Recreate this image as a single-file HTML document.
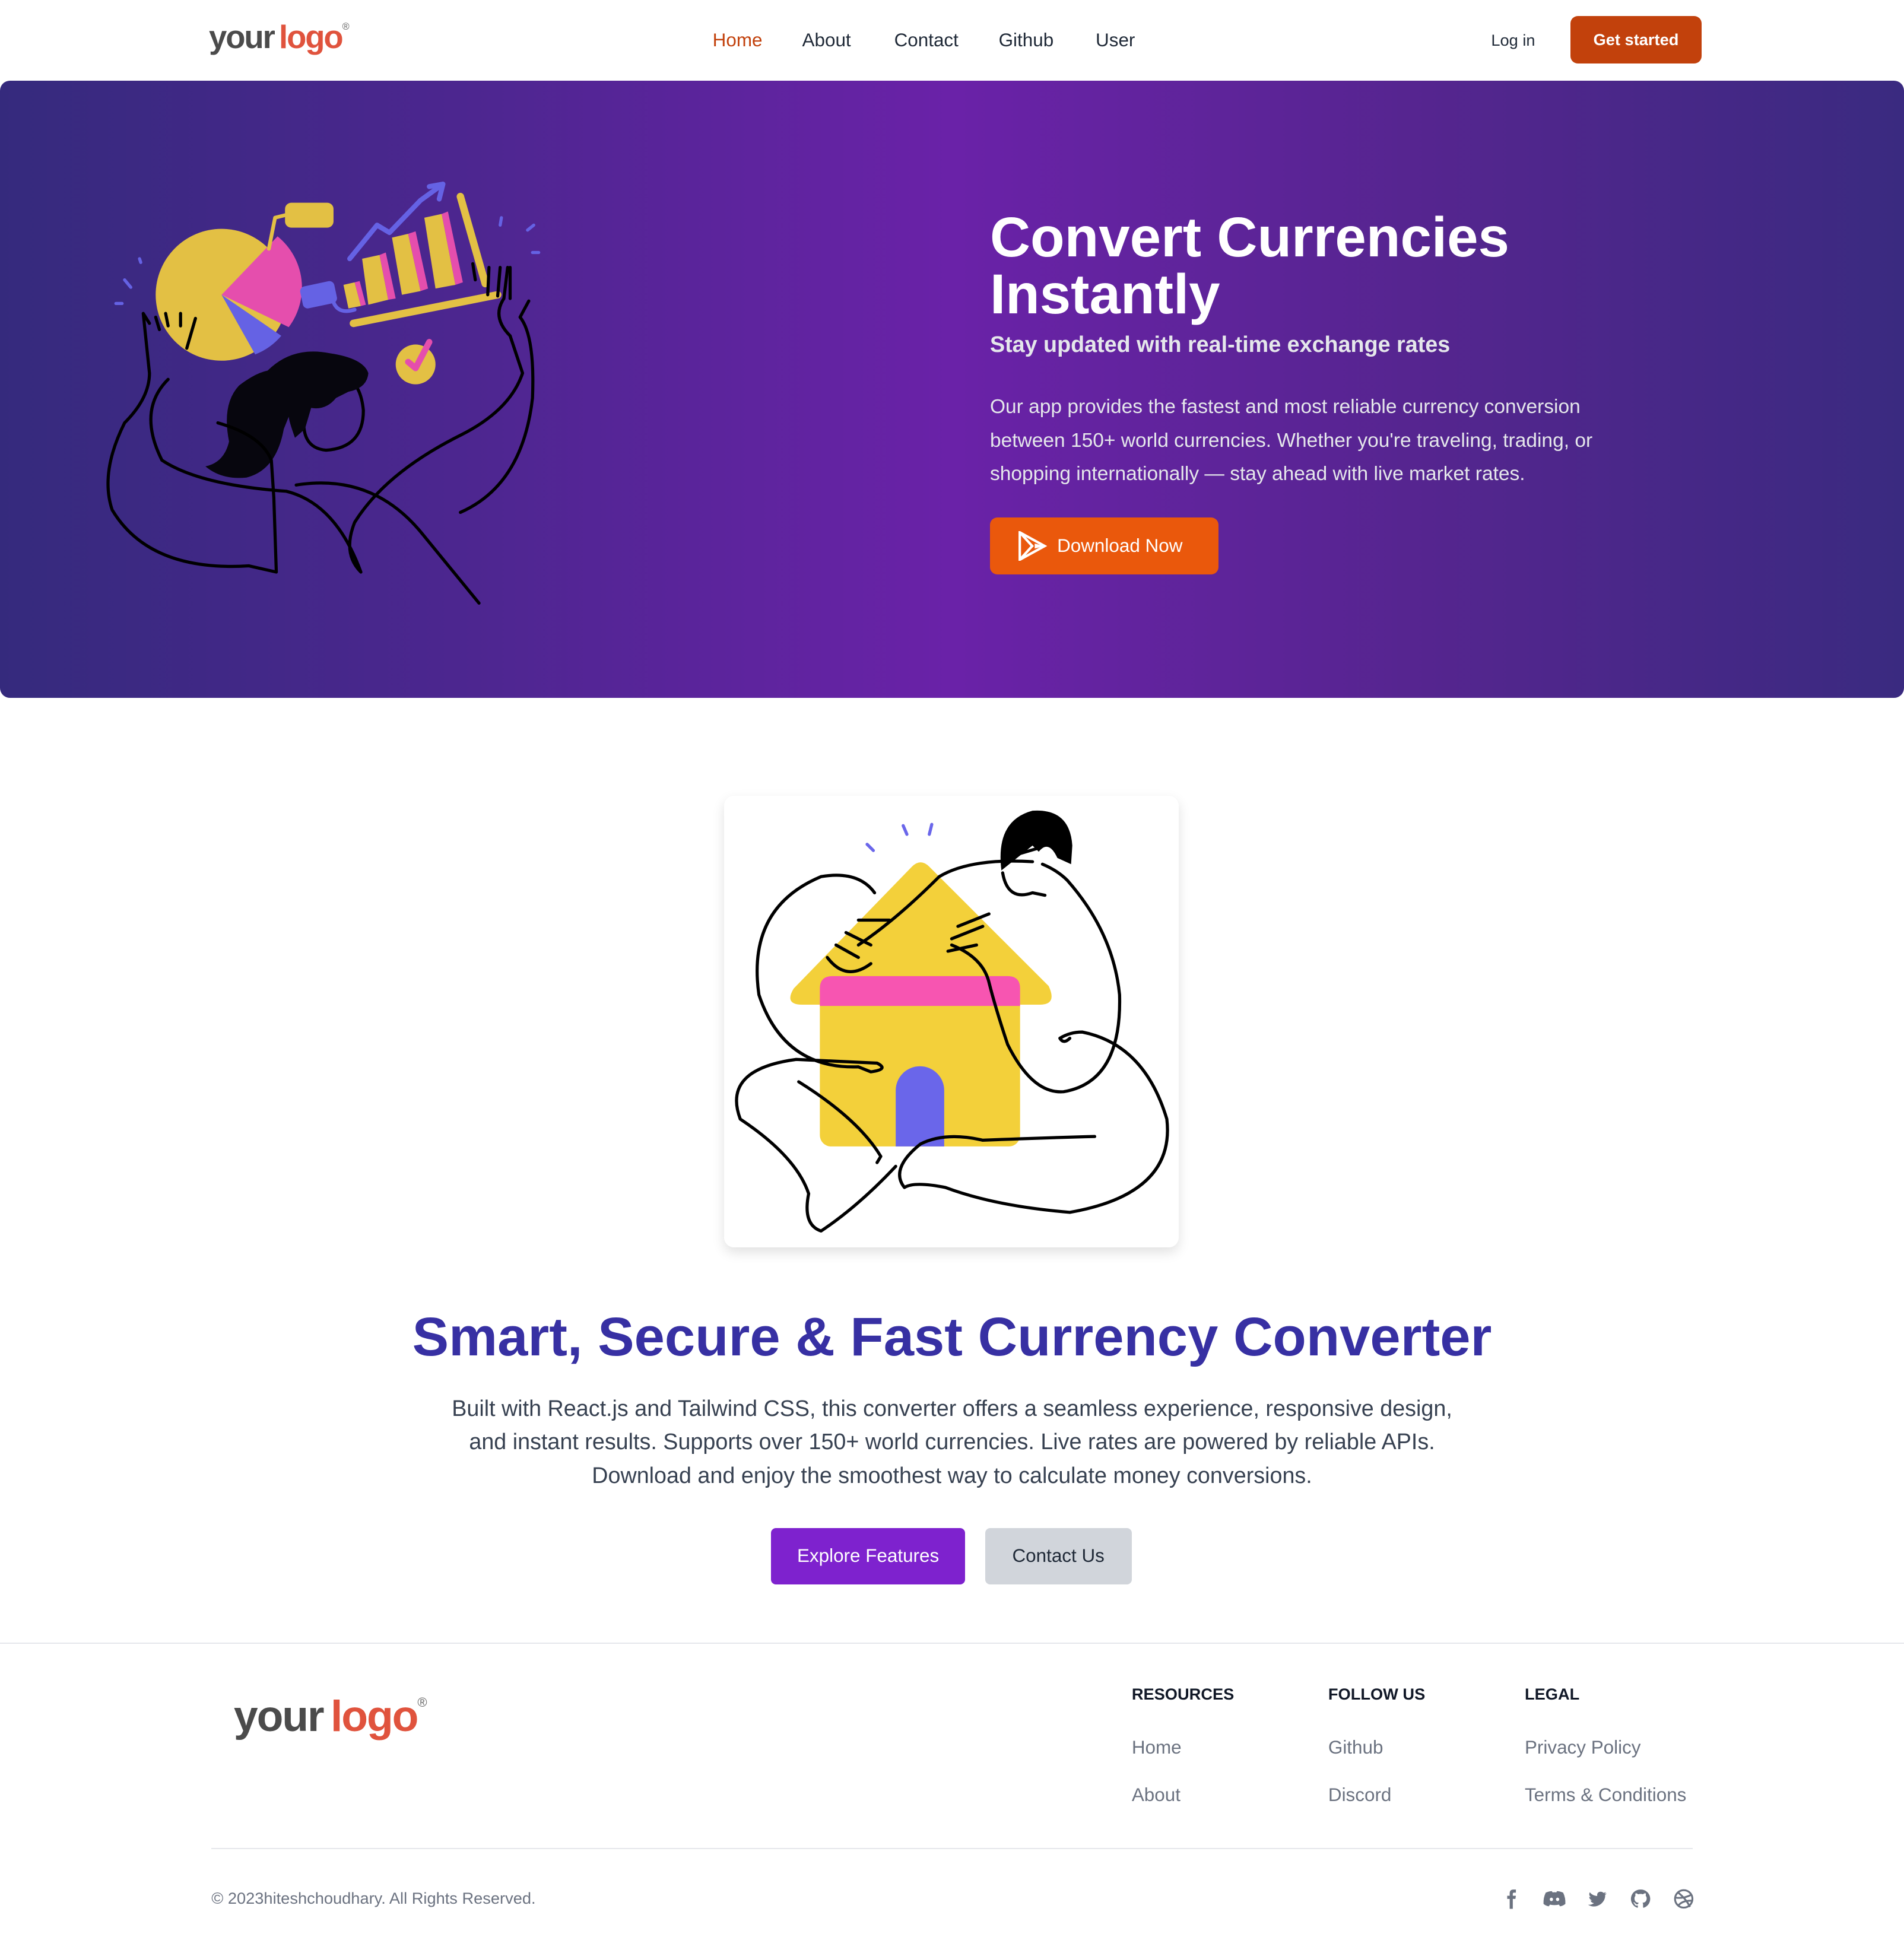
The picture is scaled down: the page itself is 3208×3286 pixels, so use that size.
<!DOCTYPE html>
<html><head><meta charset="utf-8"><style>
*{margin:0;padding:0;box-sizing:border-box}
html,body{width:3208px;height:3286px;overflow:hidden;background:#fff}
#w{zoom:2.0954;width:1531px;height:1568px;position:relative;font-family:"Liberation Sans",sans-serif;color:#111}
.a{position:absolute;white-space:nowrap}
.logo{font-weight:bold;letter-spacing:-1px}
.logo .y{color:#4b4b4b}.logo .l{color:#e0533d}.logo sup{font-size:.3em;color:#666;font-weight:normal;vertical-align:top;position:relative;top:.3em}
.nav{font-size:15px;color:#1f2937}
.hero{position:absolute;left:0;top:65px;width:1531px;height:496px;border-radius:8px;background:linear-gradient(to right,#352a7d 0%,#4d2690 25%,#6a22a8 50%,#55258f 75%,#3a2a80 100%)}
.fh{font-size:13px;font-weight:bold;color:#111827}
.fl{font-size:15px;color:#6b7280}
</style></head><body><div id="w">
<div class="a logo" style="left:168px;top:15px;font-size:26px"><span class="y">your</span><span class="l" style="margin-left:4px">logo</span><sup>®</sup></div>
<div class="a nav" style="left:573px;top:24px;color:#c2410c">Home</div>
<div class="a nav" style="left:645px;top:24px">About</div>
<div class="a nav" style="left:719px;top:24px">Contact</div>
<div class="a nav" style="left:803px;top:24px">Github</div>
<div class="a nav" style="left:881px;top:24px">User</div>
<div class="a" style="left:1199px;top:25px;font-size:13px;color:#1f2937">Log in</div>
<div class="a" style="left:1263px;top:13px;width:105px;height:38px;background:#c2410c;border-radius:6px;color:#fff;font-size:13px;font-weight:bold;text-align:center;line-height:38px">Get started</div>

<div class="hero">
<svg class="a" style="left:80px;top:70px" width="370" height="370" viewBox="80 135 370 370" fill="none" stroke-linecap="round" stroke-linejoin="round">
<circle cx="178" cy="237" r="53" fill="#e3c044"/>
<path d="M178 237 L223 190 A53 53 0 0 1 232 263 Z" fill="#e54ead"/>
<path d="M178 237 L226 270 A53 53 0 0 1 205 285 Z" fill="#6562e4"/>
<rect x="229" y="163" width="39" height="20" rx="5" fill="#e3c044"/>
<path d="M216 200 L221 175 L229 173" stroke="#e3c044" stroke-width="3"/>
<rect x="242" y="228" width="28" height="18" rx="4" fill="#6562e4" transform="rotate(-12 256 237)"/>
<path d="M268 243 Q272 253 285 249" stroke="#6562e4" stroke-width="3"/>
<path d="M280 248 L290 246 L285 227 L276 229Z" fill="#e3c044"/>
<path d="M285 227 L290 246 L294 245 L289 226Z" fill="#e54ead"/>
<path d="M296 245 L312 241 L305 205 L291 208Z" fill="#e3c044"/><path d="M305 205 L312 241 L318 240 L310 203Z" fill="#e54ead"/>
<path d="M323 237 L338 234 L328 188 L315 191Z" fill="#e3c044"/><path d="M328 188 L338 234 L344 232 L334 186Z" fill="#e54ead"/>
<path d="M350 232 L366 229 L355 172 L341 175Z" fill="#e3c044"/><path d="M355 172 L366 229 L372 227 L360 170Z" fill="#e54ead"/>
<path d="M284 260 L400 237 M370 158 L390 228" stroke="#e3c044" stroke-width="6"/>
<path d="M281 208 L303 181 L313 187 L338 161 L356 148 M356 148 L345 150 M356 148 L353 160" stroke="#6562e4" stroke-width="4"/>
<circle cx="334" cy="293" r="16" fill="#e3c044"/>
<path d="M328 291 L334 296 L345 275" stroke="#e54ead" stroke-width="5"/>
<path d="M100 225l5 6M93 244h5M112 208l1 3M403 175l-1 6M424 185l5-4M428 203h5" stroke="#6562e4" stroke-width="2.5"/>
<path d="M245 330 Q240 360 262 362 Q292 360 292 330 Q290 310 280 305" fill="none" stroke="#000" stroke-width="2.5"/>
<path d="M215 298 Q235 278 265 284 Q292 288 296 300 Q295 312 280 315 L270 320 Q262 330 250 328 L245 345 L237 352 Q232 338 232 335 L228 345 Q222 378 198 384 Q178 386 165 375 Q180 372 184 355 Q178 325 192 310 Q205 300 215 298Z" fill="#07060e"/>
<path d="M120 260 L115 252 L120 300 Q120 320 100 340 Q80 380 90 410 Q120 460 200 455 L222 460 L220 400 L218 370 Q210 350 175 340 M135 305 Q110 330 130 370 Q160 390 230 395 Q270 405 290 460 L290 460 Q275 445 285 420 Q310 380 370 350 Q410 330 420 300 L410 270 Q395 255 405 240 L408 215 M238 390 Q300 380 340 430 L385 485 M370 412 Q420 390 428 320 Q430 270 418 255 L425 242" stroke="#000" stroke-width="2.5"/>
<path d="M128 265 L125 255 M135 262 L133 252 M145 262 L145 252 M150 280 L157 256" stroke="#000" stroke-width="2.5"/>
<path d="M382 225 L380 212 M392 237 L393 215 M400 238 L402 215 M410 240 L410 215" stroke="#000" stroke-width="2.5"/>
</svg>
<div class="a" style="left:796px;top:103px;font-size:45px;font-weight:bold;color:#fff;line-height:46px">Convert Currencies<br>Instantly</div>
<div class="a" style="left:796px;top:202px;font-size:18px;font-weight:bold;color:#e5e7eb">Stay updated with real-time exchange rates</div>
<div class="a" style="left:796px;top:249px;font-size:16px;color:#e5e7eb;line-height:27px;white-space:normal;width:525px">Our app provides the fastest and most reliable currency conversion between 150+ world currencies. Whether you're traveling, trading, or shopping internationally — stay ahead with live market rates.</div>
<div class="a" style="left:796px;top:351px;width:184px;height:46px;background:#ea580c;border-radius:6px;color:#fff;font-size:15px;line-height:46px;padding-left:54px">Download Now
<svg class="a" style="left:22px;top:11px" width="24" height="24" viewBox="0 0 24 24"><path d="M2 1 L22 12 L2 23 Z M2 1 L12 12 L2 23" fill="none" stroke="#fff" stroke-width="2"/><path d="M14 10 L22 12 L14 14Z" fill="#fff"/></svg></div>
</div>

<div class="a" style="left:582px;top:640px;width:366px;height:363px;background:#fff;border-radius:8px;box-shadow:0 4px 10px rgba(0,0,0,.12)">
<svg width="366" height="363" viewBox="582 640 366 363" fill="none" stroke-linecap="round" stroke-linejoin="round">
<path d="M733 697 Q740 690 747 697 L843 793 Q850 808 836 808 L645 808 Q630 808 638 795Z" fill="#f3d03a"/>
<rect x="659" y="785" width="161" height="137" rx="9" fill="#f3d03a"/>
<path d="M659 809 V795 Q659 785 669 785 H810 Q820 785 820 795 V809Z" fill="#f755b1"/>
<path d="M720 922 V877 A19.5 19.5 0 0 1 759 877 V922Z" fill="#6a66ea"/>
<path d="M697 679l5 5M726 664l3 7M749 663l-2 8" stroke="#6a66ea" stroke-width="2.5"/>
<path d="M805 700 Q800 660 830 652 Q860 650 862 680 L861 695 L850 690 Q843 675 835 685 L830 680Z" fill="#000"/>
<path d="M806 702 Q810 725 830 718 L840 720 M808 690 L835 682 M838 695 Q850 700 858 708 Q895 750 900 800 Q902 870 855 878 Q830 880 810 840 Q800 810 795 790 Q790 770 765 760 M860 835 Q855 840 852 835 Q860 830 870 830 Q920 840 938 900 Q945 960 860 975 Q800 970 760 955 Q735 950 727 955 Q715 940 740 920 Q760 910 790 917 Q840 915 880 914 M720 938 Q690 970 660 990 Q645 985 650 960 Q640 930 595 900 Q580 860 640 852 L705 855 Q715 860 700 862 L690 858 Q630 860 610 800 Q600 730 660 705 Q690 700 703 718 M642 870 Q690 900 708 930 L705 935 M690 760 Q720 740 755 705 Q780 690 830 693" stroke="#000" stroke-width="2.5"/>
<path d="M665 770 Q680 790 700 775 M672 760 L690 770 M680 750 L700 760 M690 740 L715 740 M770 745 L795 735 M765 755 L790 745 M762 765 L785 760" stroke="#000" stroke-width="2.5"/>
</svg></div>

<div class="a" style="left:0;width:1531px;top:1050px;text-align:center;font-size:44px;font-weight:bold;color:#3730a3">Smart, Secure &amp; Fast Currency Converter</div>
<div class="a" style="left:0;width:1531px;top:1119px;text-align:center;font-size:18px;color:#374151;line-height:27px">Built with React.js and Tailwind CSS, this converter offers a seamless experience, responsive design,<br>and instant results. Supports over 150+ world currencies. Live rates are powered by reliable APIs.<br>Download and enjoy the smoothest way to calculate money conversions.</div>
<div class="a" style="left:620px;top:1229px;width:156px;height:45px;background:#7e22ce;border-radius:4px;color:#fff;font-size:15px;text-align:center;line-height:45px">Explore Features</div>
<div class="a" style="left:792px;top:1229px;width:118px;height:45px;background:#d1d5db;border-radius:4px;color:#1f2937;font-size:15px;text-align:center;line-height:45px">Contact Us</div>

<div class="a" style="left:0;top:1321px;width:1531px;height:1px;background:#e5e7eb"></div>
<div class="a logo" style="left:188px;top:1360px;font-size:35px"><span class="y">your</span><span class="l" style="margin-left:6px">logo</span><sup>®</sup></div>
<div class="a fh" style="left:910px;top:1355px">RESOURCES</div>
<div class="a fh" style="left:1068px;top:1355px">FOLLOW US</div>
<div class="a fh" style="left:1226px;top:1355px">LEGAL</div>
<div class="a fl" style="left:910px;top:1397px">Home</div>
<div class="a fl" style="left:910px;top:1435px">About</div>
<div class="a fl" style="left:1068px;top:1397px">Github</div>
<div class="a fl" style="left:1068px;top:1435px">Discord</div>
<div class="a fl" style="left:1226px;top:1397px">Privacy Policy</div>
<div class="a fl" style="left:1226px;top:1435px">Terms &amp; Conditions</div>
<div class="a" style="left:170px;top:1486px;width:1191px;height:1px;background:#e5e7eb"></div>
<div class="a" style="left:170px;top:1519px;font-size:13px;color:#6b7280">© 2023hiteshchoudhary. All Rights Reserved.</div>
<svg class="a" style="left:1208px;top:1518px" width="156" height="18" viewBox="0 0 156 18" fill="#6b7280">
<path d="M6 17V9H4V6.5h2V4.5Q6 1.5 9 1.5H11V4H9.5Q8.5 4 8.5 5V6.5H11L10.6 9H8.5V17Z"/>
<path d="M35 4Q38 2.7 40 2.8L40.5 3.8Q42 3.5 43.5 3.8L44 2.8Q46 2.7 49 4Q51 8 50.8 13Q49 14.6 46.5 15L45.6 13.6Q44 14 42 14Q40 14 38.4 13.6L37.5 15Q35 14.6 33.2 13Q33 8 35 4Z M39.5 8a1.3 1.4 0 1 0 .1 0Z M44.5 8a1.3 1.4 0 1 0 .1 0Z" fill-rule="evenodd"/>
<path d="M84 4.5Q83 5 82.2 5.1Q83 4.5 83.4 3.5Q82.5 4 81.5 4.2Q80 2.8 78 3.4Q76 4.3 76.4 6.7Q72.8 6.5 70.4 3.7Q69.3 6 71.2 7.6Q70.5 7.6 70 7.3Q70 9.5 72.3 10.2Q71.6 10.4 71 10.2Q71.7 12.3 73.8 12.4Q71.8 14 69 13.7Q74.5 16.8 79.5 13Q83 10 82.8 5.8Q83.6 5.2 84 4.5Z"/>
<path d="M111 1.5a7.5 7.5 0 0 0-2.4 14.6c.4.1.5-.2.5-.4v-1.4c-2.1.5-2.5-.9-2.5-.9-.3-.9-.8-1.1-.8-1.1-.7-.5.1-.5.1-.5.8.1 1.2.8 1.2.8.7 1.2 1.8.8 2.2.6.1-.5.3-.8.5-1-1.7-.2-3.4-.8-3.4-3.7 0-.8.3-1.5.8-2-.1-.2-.3-1 .1-2 0 0 .6-.2 2.1.8a7 7 0 0 1 3.8 0c1.4-1 2.1-.8 2.1-.8.4 1 .2 1.8.1 2 .5.5.8 1.200.8 2 0 2.9-1.8 3.5-3.4 3.7.3.2.5.7.5 1.4v2.1c0 .2.1.5.6.4A7.5 7.5 0 0 0 111 1.5Z"/>
<g fill="none" stroke="#6b7280" stroke-width="1.5"><circle cx="146" cy="9" r="7"/><path d="M141 3.5Q148 9 151 15.5M139.3 8Q146 9 152.5 5.5M141.5 14.5Q145 10 152.8 10.5"/></g>
</svg>
</div></body></html>
